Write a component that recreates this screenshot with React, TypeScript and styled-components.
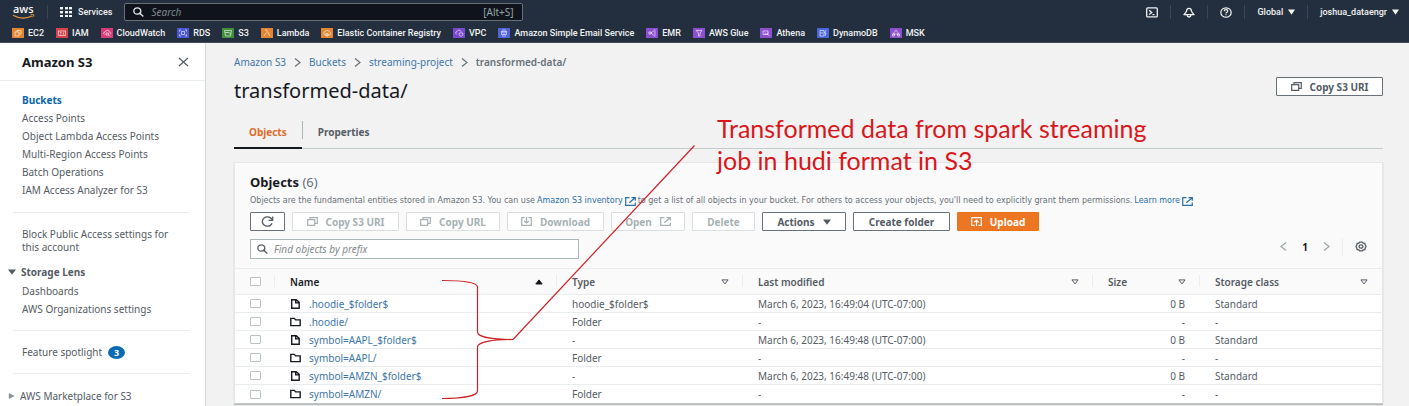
import React from "react";
import styled, { createGlobalStyle } from "styled-components";

const Global = createGlobalStyle`
  *, *::before, *::after { box-sizing: border-box; }
  body {
    margin: 0;
    background: #f2f2f2;
    color: #545b64;
    font-family: "Noto Sans", "Open Sans", sans-serif;
    font-size: 10px;
    line-height: 14px;
  }
  button, input { font: inherit; color: inherit; margin: 0; }
  a { color: inherit; text-decoration: none; }
  ul, ol { list-style: none; margin: 0; padding: 0; }
  h1, h2, p { margin: 0; font-weight: normal; }
  svg { display: block; flex: none; }
`;

/* ---------- page frame ---------- */

const Page = styled.div`
  position: relative;
  min-height: 100vh;
  display: flex;
  flex-direction: column;
`;

const Body = styled.div`
  flex: 1;
  display: flex;
`;

/* ---------- top navigation ---------- */

const Header = styled.header`
  background: #232f3e;
  color: #f2f3f3;
  border-bottom: 1px solid #414d5c;
  font-family: Roboto, "Noto Sans", sans-serif;
  font-weight: 500;
`;

const TopRow = styled.div`
  display: flex;
  align-items: center;
  height: 24px;
  padding-left: 12px;
`;

const Divider = styled.span`
  width: 1px;
  height: 14px;
  background: #3b4654;
`;

const ServicesButton = styled.button`
  display: flex;
  align-items: center;
  gap: 6px;
  margin: 0 12px;
  padding: 0;
  border: 0;
  background: none;
  font-size: 9px;
`;

const LogoLink = styled.a`
  margin-right: 11px;
`;

const NavSearch = styled.label`
  display: flex;
  align-items: center;
  gap: 7px;
  width: 28.5%;
  height: 18px;
  padding: 0 8px;
  background: #0f141c;
  border: 1px solid #687078;
  border-radius: 2px;
  color: #95a5a6;
  font-family: "Noto Sans", sans-serif;
  font-weight: 400;
  svg { color: #eaeded; }
`;

const PlainInput = styled.input`
  flex: 1;
  min-width: 0;
  padding: 0;
  border: 0;
  outline: 0;
  background: none;
  &::placeholder { color: #7f898b; font-style: italic; opacity: 1; }
`;

const NavTools = styled.div`
  display: flex;
  align-items: center;
  margin-left: auto;
`;

const NavIconButton = styled.button`
  display: flex;
  justify-content: center;
  width: 36px;
  padding: 0;
  border: 0;
  background: none;
`;

const NavMenuButton = styled.button`
  display: flex;
  align-items: center;
  gap: 5px;
  padding: 0 12px;
  border: 0;
  background: none;
  font-size: 9px;
  &:last-child { padding-right: 10px; }
`;

const Favorites = styled.nav`
  display: flex;
  align-items: center;
  gap: 12px;
  height: 18px;
  padding-left: 12px;
  font-size: 9px;
  white-space: nowrap;
`;

const Favorite = styled.a`
  display: flex;
  align-items: center;
  gap: 4px;
`;

/* ---------- side navigation ---------- */

const Sidebar = styled.nav`
  flex: none;
  width: 206px;
  background: #fff;
  border-right: 1px solid #d5dbdb;
`;

const SideHead = styled.div`
  display: flex;
  align-items: center;
  justify-content: space-between;
  height: 38px;
  padding: 0 16px 0 22px;
  border-bottom: 1px solid #eaeded;
  color: #16191f;
  font-size: 13px;
  font-weight: 700;
`;

const IconButton = styled.button`
  display: flex;
  padding: 0;
  border: 0;
  background: none;
`;

const SideGroup = styled.div`
  margin: 0 15px 0 13px;
  padding: 12px 0;
  & + & { border-top: 1px solid #eaeded; }
`;

const SideList = styled(SideGroup)`
  padding: 10px 0 13px;
`;

const SideItem = styled.a<{ $active?: boolean }>`
  display: flex;
  align-items: center;
  gap: 6px;
  min-height: 18px;
  padding-left: 9px;
  color: ${(p) => (p.$active ? "#0a66ad" : "#545b64")};
  font-weight: ${(p) => (p.$active ? 700 : 400)};
`;

const WrappedItem = styled(SideItem)`
  line-height: 13px;
  padding: 3px 12px 8px 9px;
`;

const SideToggle = styled.button<{ $bold?: boolean }>`
  display: flex;
  align-items: center;
  gap: 5px;
  height: 20px;
  margin-left: -5px;
  padding: 0;
  border: 0;
  background: none;
  font-weight: ${(p) => (p.$bold ? 700 : 400)};
`;

const CountBadge = styled.span`
  width: 17px;
  height: 13px;
  border-radius: 50%;
  background: #0a6ab4;
  color: #fff;
  font-size: 9px;
  font-weight: 700;
  line-height: 13px;
  text-align: center;
`;

/* ---------- main column ---------- */

const Main = styled.main`
  flex: 1;
  min-width: 0;
  padding: 12px 26px 1px 28px;
`;

const Crumbs = styled.ol`
  display: flex;
  align-items: center;
`;

const Crumb = styled.li<{ $last?: boolean }>`
  display: flex;
  align-items: center;
  gap: 8px;
  margin-right: 8px;
  color: ${(p) => (p.$last ? "#687078" : "#3e76a8")};
  font-weight: ${(p) => (p.$last ? 600 : 400)};
`;

const TitleRow = styled.div`
  display: flex;
  justify-content: space-between;
  align-items: flex-start;
  padding-top: 8px;
`;

const Title = styled.h1`
  color: #16191f;
  font-size: 20px;
  line-height: 28px;
`;

const Tabs = styled.div`
  display: flex;
  height: 32px;
  margin-top: 12px;
  border-bottom: 1px solid #c5cccc;
`;

const Tab = styled.button<{ $active?: boolean }>`
  display: flex;
  align-items: center;
  height: 32px;
  padding: 0 15px;
  border: 0;
  border-bottom: 2px solid ${(p) => (p.$active ? "#16191f" : "transparent")};
  background: none;
  color: ${(p) => (p.$active ? "#dd6b2a" : "#545b64")};
  font-weight: 700;
`;

const TabDivider = styled.span`
  width: 1px;
  height: 18px;
  margin-top: 4px;
  background: #aab7b8;
`;

const Card = styled.section`
  margin-top: 13px;
  background: #fafafa;
  border: 1px solid #e3e7e7;
  border-bottom-color: #c2c6c6;
  box-shadow: 0 1px 1px #b8bcbc;
`;

const CardHead = styled.div`
  padding: 12px 15px 9px;
`;

const CardTitle = styled.h2`
  color: #16191f;
  font-size: 13px;
  font-weight: 700;
  span { color: #687078; font-weight: 400; }
`;

const Description = styled.p`
  display: flex;
  align-items: center;
  gap: 2px;
  margin-top: 6px;
  font-family: "DejaVu Sans", sans-serif;
  font-size: 8px;
  line-height: 12px;
  color: #687078;
  white-space: nowrap;
`;

const TextLink = styled.a`
  display: inline-flex;
  align-items: center;
  gap: 2px;
  color: #2a6ea6;
`;

const Toolbar = styled.div`
  display: flex;
  gap: 7px;
  margin-top: 5px;
`;

const Button = styled.button<{ $primary?: boolean; $width: number }>`
  display: flex;
  align-items: center;
  justify-content: center;
  gap: 8px;
  height: 19px;
  min-width: ${(p) => p.$width}px;
  padding: 0 4px;
  border: 1px solid ${(p) => (p.$primary ? "#ec7211" : "#687078")};
  border-radius: 1px;
  background: ${(p) => (p.$primary ? "#ec7623" : "#fff")};
  color: ${(p) => (p.$primary ? "#fff" : "#545b64")};
  font-weight: 700;
  white-space: nowrap;
  &:disabled { border-color: #d9dedf; color: #a7b1b3; }
`;

const FilterRow = styled.div`
  display: flex;
  align-items: center;
  justify-content: space-between;
  margin-top: 8px;
`;

const FilterBox = styled.label`
  display: flex;
  align-items: center;
  gap: 6px;
  width: 329px;
  height: 20px;
  padding: 0 6px;
  background: #fff;
  border: 1px solid #aab7b8;
  color: #545b64;
`;

const Pager = styled.div`
  display: flex;
  align-items: center;
  gap: 15px;
  margin-top: -5px;
  color: #16191f;
  font-weight: 700;
`;

const PagerDivider = styled.span`
  width: 1px;
  height: 18px;
  margin: 0 -3px;
  background: #eaeded;
`;

/* ---------- object table ---------- */

const Table = styled.table`
  width: 100%;
  table-layout: fixed;
  border-collapse: separate;
  border-spacing: 0;
`;

const HeadCell = styled.th`
  position: relative;
  height: 27px;
  padding: 0 14px 0 15px;
  border-top: 1px solid #eaeded;
  border-bottom: 1px solid #eaeded;
  text-align: left;
  font-weight: 600;
  &:not(:last-child)::after {
    content: "";
    position: absolute;
    right: 0;
    top: 6px;
    width: 1px;
    height: 12px;
    background: #eaeded;
  }
`;

const HeadLabel = styled.div<{ $sorted?: boolean }>`
  display: flex;
  align-items: center;
  justify-content: space-between;
  color: ${(p) => (p.$sorted ? "#16191f" : "#545b64")};
`;

const Cell = styled.td<{ $right?: boolean }>`
  height: 18px;
  padding: 0 15px;
  background: #fff;
  text-align: ${(p) => (p.$right ? "right" : "left")};
  white-space: nowrap;
  tr:not(:last-child) > & { border-bottom: 1px solid #eaeded; }
`;

const ObjectLink = styled.a`
  display: flex;
  align-items: center;
  gap: 8px;
  color: #3e76a8;
  svg { color: #16191f; }
`;

const Tick = styled.input`
  appearance: none;
  display: block;
  width: 11px;
  height: 9px;
  border: 1px solid #b9c3c4;
  border-radius: 1px;
  background: #fff;
`;

/* ---------- annotation laid over the page ---------- */

const Note = styled.p`
  position: absolute;
  left: 717px;
  top: 112px;
  color: #d8161b;
  font-family: Lato, "Open Sans", sans-serif;
  font-size: 25px;
  line-height: 32px;
  white-space: nowrap;
`;

const Bracket = styled.svg`
  position: absolute;
  left: 440px;
  top: 140px;
  pointer-events: none;
`;

/* ---------- icons ---------- */

const AwsLogo = () => (
  <svg width="24" height="20" viewBox="0 0 24 20" role="img" aria-label="aws">
    <text x="1" y="11" fill="#fff" fontFamily="Noto Sans" fontSize="11" fontWeight="500">aws</text>
    <path d="M1 13.200c6 3.400 13.500 3.400 19 .8" fill="none" stroke="#e8973c" strokeWidth="1.300" />
    <path d="M18.500 12.700c2-.4 3.500-.4 3.300.3-.1.800-.6 1.600-1.300 2.300" fill="none" stroke="#e8973c" />
  </svg>
);

const GridIcon = () => (
  <svg width="12" height="10" viewBox="0 0 12 10" fill="currentColor">
    {[0, 4, 8].map((y) =>
      [0, 5, 9].map((x) => <rect key={`${x}-${y}`} x={x} y={y} width="3" height="2.400" />)
    )}
  </svg>
);

const SearchIcon = () => (
  <svg width="11" height="10" viewBox="0 0 11 10" fill="none" stroke="currentColor" strokeWidth="1.300">
    <ellipse cx="4.300" cy="4" rx="3.500" ry="3.200" />
    <path d="M6.800 6.300l3.500 3.200" />
  </svg>
);

const TerminalIcon = () => (
  <svg width="12" height="11" viewBox="0 0 12 11" fill="none" stroke="currentColor" strokeWidth="1.300">
    <rect x=".7" y=".9" width="10.600" height="9" rx="1" />
    <path d="M3.200 3.200l2.600 2.200-2.600 2.200M6.500 7.600h2" />
  </svg>
);

const BellIcon = () => (
  <svg width="12" height="11" viewBox="0 0 12 11" fill="none" stroke="currentColor" strokeWidth="1.300">
    <path d="M6 1.300C4.300 1.300 3.700 2.500 3.500 4 3.300 5.300 2 6.300 1 7.700h10C10 6.300 8.700 5.300 8.500 4 8.300 2.500 7.700 1.300 6 1.300z" strokeLinejoin="round" />
    <path d="M4 8.200c.2 1.200.9 1.800 2 1.800s1.800-.6 2-1.800" />
  </svg>
);

const HelpIcon = () => (
  <svg width="12" height="11" viewBox="0 0 12 11" fill="none" stroke="currentColor" strokeWidth="1.200">
    <ellipse cx="6" cy="5.500" rx="5.200" ry="4.700" />
    <path d="M4.200 4.300c0-1 .8-1.600 1.800-1.600s1.800.6 1.800 1.400c0 1.100-1.800 1.100-1.800 2.400M6 7.300v1" />
  </svg>
);

const CaretDown = ({ size = 6 }: { size?: number }) => (
  <svg width={size} height="6" viewBox="0 0 8 6" preserveAspectRatio="none" fill="currentColor">
    <path d="M0 .5h8L4 5.800z" />
  </svg>
);

const CaretRight = () => (
  <svg width="7" height="6" viewBox="0 0 7 6" fill="#879196">
    <path d="M.8 0v6L6.500 3z" />
  </svg>
);

const SortIcon = ({ sorted }: { sorted?: boolean }) => (
  <svg width="8" height="6" viewBox="0 0 8 6" fill={sorted ? "currentColor" : "none"} stroke="currentColor">
    {sorted ? <path d="M4 .9L7.200 5H.8z" /> : <path d="M.9 .9h6.200L4 4.900z" />}
  </svg>
);

const CloseIcon = () => (
  <svg width="11" height="10" viewBox="0 0 11 10" stroke="#545b64" strokeWidth="1.200">
    <path d="M1 1l9 8M10 1L1 9" />
  </svg>
);

const Chevron = ({ left, color = "#687078" }: { left?: boolean; color?: string }) => (
  <svg width="7" height="9" viewBox="0 0 7 9" fill="none" stroke={color} strokeWidth="1.200">
    <path d={left ? "M6 .5L1 4.500l5 4" : "M1 .5l5 4-5 4"} />
  </svg>
);

const CopyIcon = () => (
  <svg width="11" height="9" viewBox="0 0 11 9" fill="none" stroke="currentColor" strokeWidth="1.200">
    <path d="M.7 2.700h7v5.700h-7zM3 2.500V.7h7.300v5.700H8" />
  </svg>
);

const RefreshIcon = () => (
  <svg width="13" height="11" viewBox="0 0 13 11" fill="none" stroke="currentColor" strokeWidth="1.300">
    <path d="M11 7.200C10.300 9 8.600 10.200 6.500 10.200 3.600 10.200 1.300 8.100 1.300 5.500S3.600.9 6.500.9c2.100 0 3.700 1.100 4.700 2.900" />
    <path d="M11.700.5v3.800H7.600" />
  </svg>
);

const TransferIcon = ({ up }: { up?: boolean }) => (
  <svg width="11" height="9" viewBox="0 0 11 9" fill="none" stroke="currentColor" strokeWidth="1.200">
    <path d={up ? "M3.500 8.300H.7V.7h9.600v7.600H7.500" : "M3.500.7H.7v7.600h9.600V.7H7.500"} />
    <path d={up ? "M5.500 9V3.200M3.200 5.200l2.300-2 2.300 2" : "M5.500 0v6M3.200 4l2.300 2 2.300-2"} />
  </svg>
);

const ExternalIcon = () => (
  <svg width="11" height="9" viewBox="0 0 11 9" fill="none" stroke="currentColor" strokeWidth="1.200">
    <path d="M4.500.7H.7v7.600h9.600V5.500M6.500.7h3.800v3M10.200.8L4.300 5.700" />
  </svg>
);

const GearIcon = () => (
  <svg width="12" height="11" viewBox="0 0 12 11" fill="none" stroke="#545b64" strokeWidth="1.300">
    <path d="M4.600 1.200h2.800l.9 1 1.600.3.300 1.500.9 1.500-.9 1.500-.3 1.500-1.600.3-.9 1H4.600l-.9-1-1.600-.3-.3-1.500L.9 5.500l.9-1.500.3-1.500 1.600-.3z" strokeLinejoin="round" />
    <ellipse cx="6" cy="5.500" rx="1.900" ry="1.700" />
  </svg>
);

const FileIcon = () => (
  <svg width="11" height="10" viewBox="0 0 11 10" fill="none" stroke="currentColor" strokeWidth="1.400">
    <path d="M1.700.8h4.500l3 2.600v5.800H1.700zM5.700.8v3.100h3.500" />
  </svg>
);

const FolderIcon = () => (
  <svg width="11" height="10" viewBox="0 0 11 10" fill="none" stroke="currentColor" strokeWidth="1.400">
    <path d="M.8 1.400h3.500l1.300 1.500h4.600v5.700H.8z" />
  </svg>
);

const ServiceIcon = ({ color, glyph }: { color: string; glyph: string }) => (
  <svg width="12" height="10" viewBox="0 0 12 10">
    <rect width="12" height="10" fill={color} />
    <path d={glyph} fill="none" stroke="#fff" strokeOpacity=".75" strokeWidth=".8" />
  </svg>
);

/* ---------- data ---------- */

const favorites = [
  { name: "EC2", color: "#e58431", glyph: "M3 4h4v4H3zM5 4V2.500h4V6H7" },
  { name: "IAM", color: "#d6424c", glyph: "M2.500 3h7v4.500h-7zM4 4.500h1.500M4 6h1.500M7.500 4.500v2" },
  { name: "CloudWatch", color: "#d63a78", glyph: "M3.500 6.500C2 6 2.500 4 4 4c.5-2 4-2 4.500 0 1.500.3 1.500 2 .5 2.500M5 5h2.500v2H5zM7.500 7L9 8.500" },
  { name: "RDS", color: "#4a55d8", glyph: "M2.500 3.500V2H4M8 2h1.500v1.500M9.500 6.500V8H8M4 8H2.500V6.500M4.500 3.500h3v3h-3z" },
  { name: "S3", color: "#3f8f3a", glyph: "M2.500 2.500h7L8.500 8h-5zM3 4.500h4l2 1.500" },
  { name: "Lambda", color: "#e58431", glyph: "M4 2h1.500L9 8M5.500 4.500L3 8" },
  { name: "Elastic Container Registry", color: "#e58431", glyph: "M3.500 7C2 6 2.500 4 4 4c.5-2 4-2 4.500 0 1.500.3 1.500 2 .5 3zM5 5.500h2V8H5z" },
  { name: "VPC", color: "#7c48cf", glyph: "M3.500 6C2 5.500 2.500 4 4 3.500c.5-2 4-1.500 4 .3M6 5.500l2-.8 2 .8c0 1.500-1 2.500-2 3-1-.5-2-1.500-2-3z" },
  { name: "Amazon Simple Email Service", color: "#4f62d6", glyph: "M3.500 3.500h5v3h-5zM3.500 3.500L6 5.500l2.500-2M4 2h4M4 8h4" },
  { name: "EMR", color: "#8b4fd0", glyph: "M3 4h2v2H3zM5 5l3-2.500M5 5l3 2.500M8 2h1.500M8 8h1.500M9 3v4" },
  { name: "AWS Glue", color: "#8b4fd0", glyph: "M3 2.500h6L7 5v3H5.500V5z" },
  { name: "Athena", color: "#8b4fd0", glyph: "M3 3h5v3.500H3zM5 4.500a1.500 1.500 0 1 0 3 0M7.500 6l2 2" },
  { name: "DynamoDB", color: "#4a66d8", glyph: "M3 2.500h4V8H3zM3 5h3M9 2L7.500 5H9L8 8" },
  { name: "MSK", color: "#8b4fd0", glyph: "M6 2L3 6h6zM2.500 6h2v2h-2zM7.500 6h2v2h-2z" },
];

const bucketLinks = [
  "Buckets",
  "Access Points",
  "Object Lambda Access Points",
  "Multi-Region Access Points",
  "Batch Operations",
  "IAM Access Analyzer for S3",
];

const columns = [
  { label: "Name", width: 282 },
  { label: "Type", width: 186 },
  { label: "Last modified", width: 350 },
  { label: "Size", width: 107 },
  { label: "Storage class", width: 182 },
];

const objects = [
  { name: ".hoodie_$folder$", type: "hoodie_$folder$", modified: "March 6, 2023, 16:49:04 (UTC-07:00)" },
  { name: ".hoodie/", type: "Folder" },
  { name: "symbol=AAPL_$folder$", type: "-", modified: "March 6, 2023, 16:49:48 (UTC-07:00)" },
  { name: "symbol=AAPL/", type: "Folder" },
  { name: "symbol=AMZN_$folder$", type: "-", modified: "March 6, 2023, 16:49:48 (UTC-07:00)" },
  { name: "symbol=AMZN/", type: "Folder" },
];

/* ---------- sections ---------- */

const TopNavigation = () => (
  <Header>
    <TopRow>
      <LogoLink href="#"><AwsLogo /></LogoLink>
      <Divider />
      <ServicesButton><GridIcon />Services</ServicesButton>
      <NavSearch>
        <SearchIcon />
        <PlainInput type="text" placeholder="Search" aria-label="Search" />
        <span>[Alt+S]</span>
      </NavSearch>
      <NavTools>
        <NavIconButton aria-label="CloudShell"><TerminalIcon /></NavIconButton>
        <Divider />
        <NavIconButton aria-label="Notifications"><BellIcon /></NavIconButton>
        <Divider />
        <NavIconButton aria-label="Help"><HelpIcon /></NavIconButton>
        <Divider />
        <NavMenuButton>Global<CaretDown size={7} /></NavMenuButton>
        <Divider />
        <NavMenuButton>joshua_dataengr<CaretDown size={7} /></NavMenuButton>
      </NavTools>
    </TopRow>
    <Favorites aria-label="Favorites">
      {favorites.map((f) => (
        <Favorite href="#" key={f.name}>
          <ServiceIcon color={f.color} glyph={f.glyph} />
          {f.name}
        </Favorite>
      ))}
    </Favorites>
  </Header>
);

const SideNavigation = () => (
  <Sidebar aria-label="Amazon S3">
    <SideHead>
      Amazon S3
      <IconButton aria-label="Close navigation"><CloseIcon /></IconButton>
    </SideHead>
    <SideList>
      {bucketLinks.map((label, i) => (
        <SideItem href="#" key={label} $active={i === 0}>{label}</SideItem>
      ))}
    </SideList>
    <SideGroup>
      <WrappedItem href="#">Block Public Access settings for this account</WrappedItem>
      <SideToggle $bold><CaretDown size={8} />Storage Lens</SideToggle>
      <SideItem href="#">Dashboards</SideItem>
      <SideItem href="#">AWS Organizations settings</SideItem>
    </SideGroup>
    <SideGroup>
      <SideItem href="#">Feature spotlight<CountBadge>3</CountBadge></SideItem>
    </SideGroup>
    <SideGroup>
      <SideToggle><CaretRight />AWS Marketplace for S3</SideToggle>
    </SideGroup>
  </Sidebar>
);

const ObjectsTable = () => (
  <Table>
    <colgroup>
      <col width={40} />
      {columns.map((c) => <col key={c.label} width={c.width} />)}
    </colgroup>
    <thead>
      <tr>
        <HeadCell scope="col"><Tick type="checkbox" aria-label="Select all objects" /></HeadCell>
        {columns.map((c, i) => (
          <HeadCell scope="col" key={c.label}>
            <HeadLabel $sorted={i === 0}>{c.label}<SortIcon sorted={i === 0} /></HeadLabel>
          </HeadCell>
        ))}
      </tr>
    </thead>
    <tbody>
      {objects.map((o) => (
        <tr key={o.name}>
          <Cell><Tick type="checkbox" aria-label={`Select ${o.name}`} /></Cell>
          <Cell>
            <ObjectLink href="#">
              {o.type === "Folder" ? <FolderIcon /> : <FileIcon />}
              {o.name}
            </ObjectLink>
          </Cell>
          <Cell>{o.type}</Cell>
          <Cell>{o.modified ?? "-"}</Cell>
          <Cell $right>{o.modified ? "0 B" : "-"}</Cell>
          <Cell>{o.modified ? "Standard" : "-"}</Cell>
        </tr>
      ))}
    </tbody>
  </Table>
);

const ObjectsCard = () => (
  <Card>
    <CardHead>
      <CardTitle>Objects <span>(6)</span></CardTitle>
      <Description>
        Objects are the fundamental entities stored in Amazon S3. You can use
        <TextLink href="#">Amazon S3 inventory<ExternalIcon /></TextLink>
        to get a list of all objects in your bucket. For others to access your objects, you'll need to explicitly grant them permissions.
        <TextLink href="#">Learn more<ExternalIcon /></TextLink>
      </Description>
      <Toolbar>
        <Button $width={35} aria-label="Refresh"><RefreshIcon /></Button>
        <Button $width={107} disabled><CopyIcon />Copy S3 URI</Button>
        <Button $width={94} disabled><CopyIcon />Copy URL</Button>
        <Button $width={97} disabled><TransferIcon />Download</Button>
        <Button $width={74} disabled>Open<ExternalIcon /></Button>
        <Button $width={63} disabled>Delete</Button>
        <Button $width={84}>Actions<CaretDown size={8} /></Button>
        <Button $width={97}>Create folder</Button>
        <Button $width={82} $primary><TransferIcon up />Upload</Button>
      </Toolbar>
      <FilterRow>
        <FilterBox>
          <SearchIcon />
          <PlainInput type="text" placeholder="Find objects by prefix" aria-label="Find objects by prefix" />
        </FilterBox>
        <Pager>
          <IconButton aria-label="Previous page"><Chevron left color="#9aa5a6" /></IconButton>
          1
          <IconButton aria-label="Next page"><Chevron color="#9aa5a6" /></IconButton>
          <PagerDivider />
          <IconButton aria-label="Preferences"><GearIcon /></IconButton>
        </Pager>
      </FilterRow>
    </CardHead>
    <ObjectsTable />
  </Card>
);

const crumbs = ["Amazon S3", "Buckets", "streaming-project"];

export default function App() {
  return (
    <Page>
      <Global />
      <TopNavigation />
      <Body>
        <SideNavigation />
        <Main>
          <Crumbs>
            {crumbs.map((c) => (
              <Crumb key={c}><a href="#">{c}</a><Chevron /></Crumb>
            ))}
            <Crumb $last>transformed-data/</Crumb>
          </Crumbs>
          <TitleRow>
            <Title>transformed-data/</Title>
            <Button $width={107}><CopyIcon />Copy S3 URI</Button>
          </TitleRow>
          <Tabs role="tablist">
            <Tab role="tab" aria-selected $active>Objects</Tab>
            <TabDivider />
            <Tab role="tab" aria-selected={false}>Properties</Tab>
          </Tabs>
          <ObjectsCard />
        </Main>
      </Body>
      <Bracket width="260" height="262" viewBox="0 0 260 262" fill="none" stroke="#cf2026" strokeWidth="1.200">
        <path d="M2 140.500C22 140.500 37.500 142 37.500 147V192C37.500 197 53 199.500 73 199.500C53 199.500 37.500 202 37.500 207V251C37.500 256 22 258.500 2 258.500" />
        <path d="M73 199.500L254.500 5.500" />
      </Bracket>
      <Note>Transformed data from spark streaming<br />job in hudi format in S3</Note>
    </Page>
  );
}
